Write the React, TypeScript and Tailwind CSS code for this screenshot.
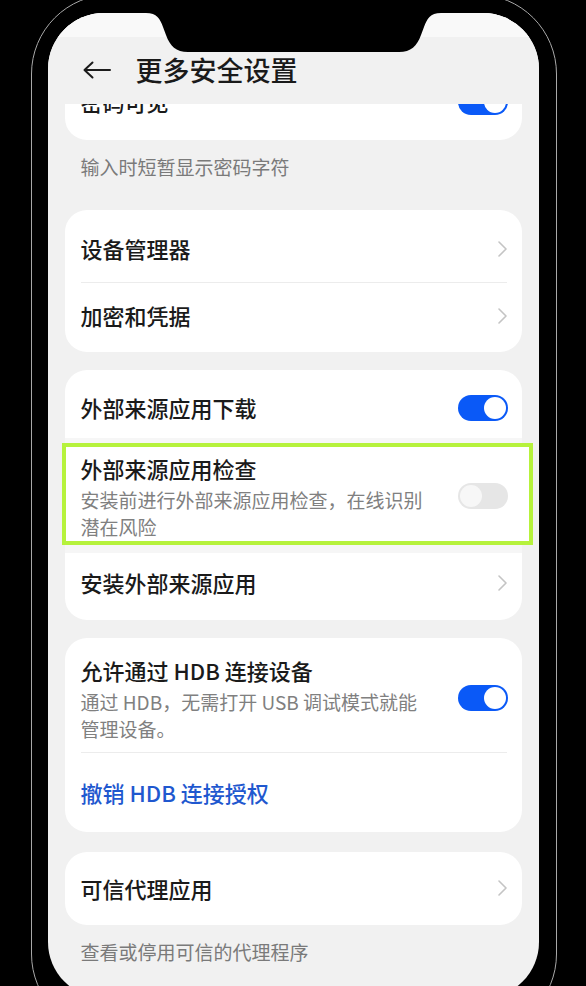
import React from "react";

function Toggle({ on }: { on: boolean }) {
  return on ? (
    <div className="flex h-[26px] w-[50px] shrink-0 items-center justify-end rounded-full bg-[#0a59f7] p-[2px]">
      <div className="h-[22px] w-[22px] rounded-full bg-white" />
    </div>
  ) : (
    <div className="flex h-[26px] w-[50px] shrink-0 items-center justify-start rounded-full bg-[#e6e6e6] p-[2px]">
      <div className="h-[22px] w-[22px] rounded-full bg-[#f7f7f7]" />
    </div>
  );
}

function Chevron() {
  return (
    <svg width="12" height="16" viewBox="0 0 12 16" className="shrink-0">
      <path d="M3 1 L10 8 L3 15" fill="none" stroke="#c4c4c4" strokeWidth="1.6" strokeLinecap="round" strokeLinejoin="round" />
    </svg>
  );
}

function Divider() {
  return <div className="ml-[16px] mr-[15px] h-px bg-[#ececec]" />;
}

export default function App() {
  return (
    <div className="h-[986px] w-full overflow-hidden bg-black font-['Noto_Sans_CJK_SC','Noto_Sans',sans-serif]">
      <div className="ml-[31px] mt-[-6px] h-[1040px] w-[526px] rounded-[80px] border-[1.5px] border-[#a8a8a8] px-[15.5px] pt-[17.5px]">
        <div className="relative h-[985px] w-[491px] overflow-hidden rounded-[56px] bg-[#f1f1f1]">
          {/* notch */}
          <svg className="absolute left-0 top-0 z-20" width="491" height="40" viewBox="0 0 491 40">
            <path
              d="M98 0 C109 0 112 6 115 14 L118 22 C122 33 128 39 140 39 L351 39 C363 39 369 33 373 22 L376 14 C379 6 382 0 393 0 Z"
              fill="#000"
            />
          </svg>

          {/* header */}
          <div className="relative z-10 h-[91px] bg-[#f1f1f1]">
            <div className="h-[24px] bg-[#f9f9f9]" />
            <div className="flex h-[67px] items-center pl-[35px]">
              <svg width="28" height="18" viewBox="0 0 28 18">
                <path d="M27 9 H1.5 M9.5 1.5 L1.5 9 L9.5 16.5" fill="none" stroke="#1c1c1c" strokeWidth="2" strokeLinecap="round" strokeLinejoin="round" />
              </svg>
              <div className="ml-[25px] text-[27px] font-medium leading-[34px] text-[#1a1a1a]">更多安全设置</div>
            </div>
          </div>

          {/* list */}
          <div className="h-[894px] overflow-hidden">
            {/* card 1 (scrolled) */}
            <div className="mx-[17px] mt-[-35px] rounded-[22px] bg-white pb-[5px]">
              <div className="flex h-[66px] items-center justify-between pl-[16px] pr-[14px]">
                <span className="text-[22px] font-medium text-[#1a1a1a]">密码可见</span>
                <Toggle on />
              </div>
            </div>
            <p className="mb-[30px] mt-[13px] px-[33px] text-[19px] leading-[27px] text-[#7a7a7a]">输入时短暂显示密码字符</p>

            {/* card 2 */}
            <div className="mx-[17px] rounded-[22px] bg-white pb-[3px] pt-[6px]">
              <div className="flex h-[66px] items-center justify-between pl-[16px] pr-[14px]">
                <span className="text-[22px] font-medium text-[#1a1a1a]">设备管理器</span>
                <Chevron />
              </div>
              <Divider />
              <div className="flex h-[66px] items-center justify-between pl-[16px] pr-[14px]">
                <span className="text-[22px] font-medium text-[#1a1a1a]">加密和凭据</span>
                <Chevron />
              </div>
            </div>

            {/* card 3 */}
            <div className="mx-[17px] mt-[18px] rounded-[22px] bg-white pb-[7px] pt-[8px]">
              <div className="flex h-[60px] items-center justify-between pl-[16px] pr-[14px]">
                <span className="text-[22px] font-medium text-[#1a1a1a]">外部来源应用下载</span>
                <Toggle on />
              </div>
              <div className="relative flex items-center justify-between bg-[#f6f6f6] pb-[13px] pl-[16px] pr-[14px] pt-[15px]">
                <div className="absolute bottom-[8px] left-[-3px] right-[-11px] top-[5px] border-[4px] border-[#b6f23c] bg-white" />
                <div className="relative">
                  <div className="text-[22px] font-medium leading-[30px] text-[#1a1a1a]">外部来源应用检查</div>
                  <div className="mt-[3px] text-[19px] leading-[27px] text-[#808080]">
                    安装前进行外部来源应用检查，在线识别
                    <br />
                    潜在风险
                  </div>
                </div>
                <div className="relative">
                  <Toggle on={false} />
                </div>
              </div>
              <div className="flex h-[60px] items-center justify-between pl-[16px] pr-[14px]">
                <span className="text-[22px] font-medium text-[#1a1a1a]">安装外部来源应用</span>
                <Chevron />
              </div>
            </div>

            {/* card 4 */}
            <div className="mx-[17px] mt-[18px] rounded-[22px] bg-white">
              <div className="flex items-center justify-between pb-[10px] pl-[16px] pr-[14px] pt-[17px]">
                <div>
                  <div className="text-[22px] font-medium leading-[30px] text-[#1a1a1a]">允许通过 HDB 连接设备</div>
                  <div className="mt-[3px] text-[19px] leading-[27px] text-[#808080]">
                    通过 HDB，无需打开 USB 调试模式就能
                    <br />
                    管理设备。
                  </div>
                </div>
                <Toggle on />
              </div>
              <Divider />
              <div className="flex h-[79px] items-center pl-[16px]">
                <span className="text-[22px] font-medium text-[#1f58cf]">撤销 HDB 连接授权</span>
              </div>
            </div>

            {/* card 5 */}
            <div className="mx-[17px] mt-[20px] rounded-[22px] bg-white">
              <div className="flex h-[73px] items-center justify-between pl-[16px] pr-[14px]">
                <span className="text-[22px] font-medium text-[#1a1a1a]">可信代理应用</span>
                <Chevron />
              </div>
            </div>
            <p className="mt-[13px] px-[33px] text-[19px] leading-[27px] text-[#7a7a7a]">查看或停用可信的代理程序</p>
          </div>
        </div>
      </div>
    </div>
  );
}
